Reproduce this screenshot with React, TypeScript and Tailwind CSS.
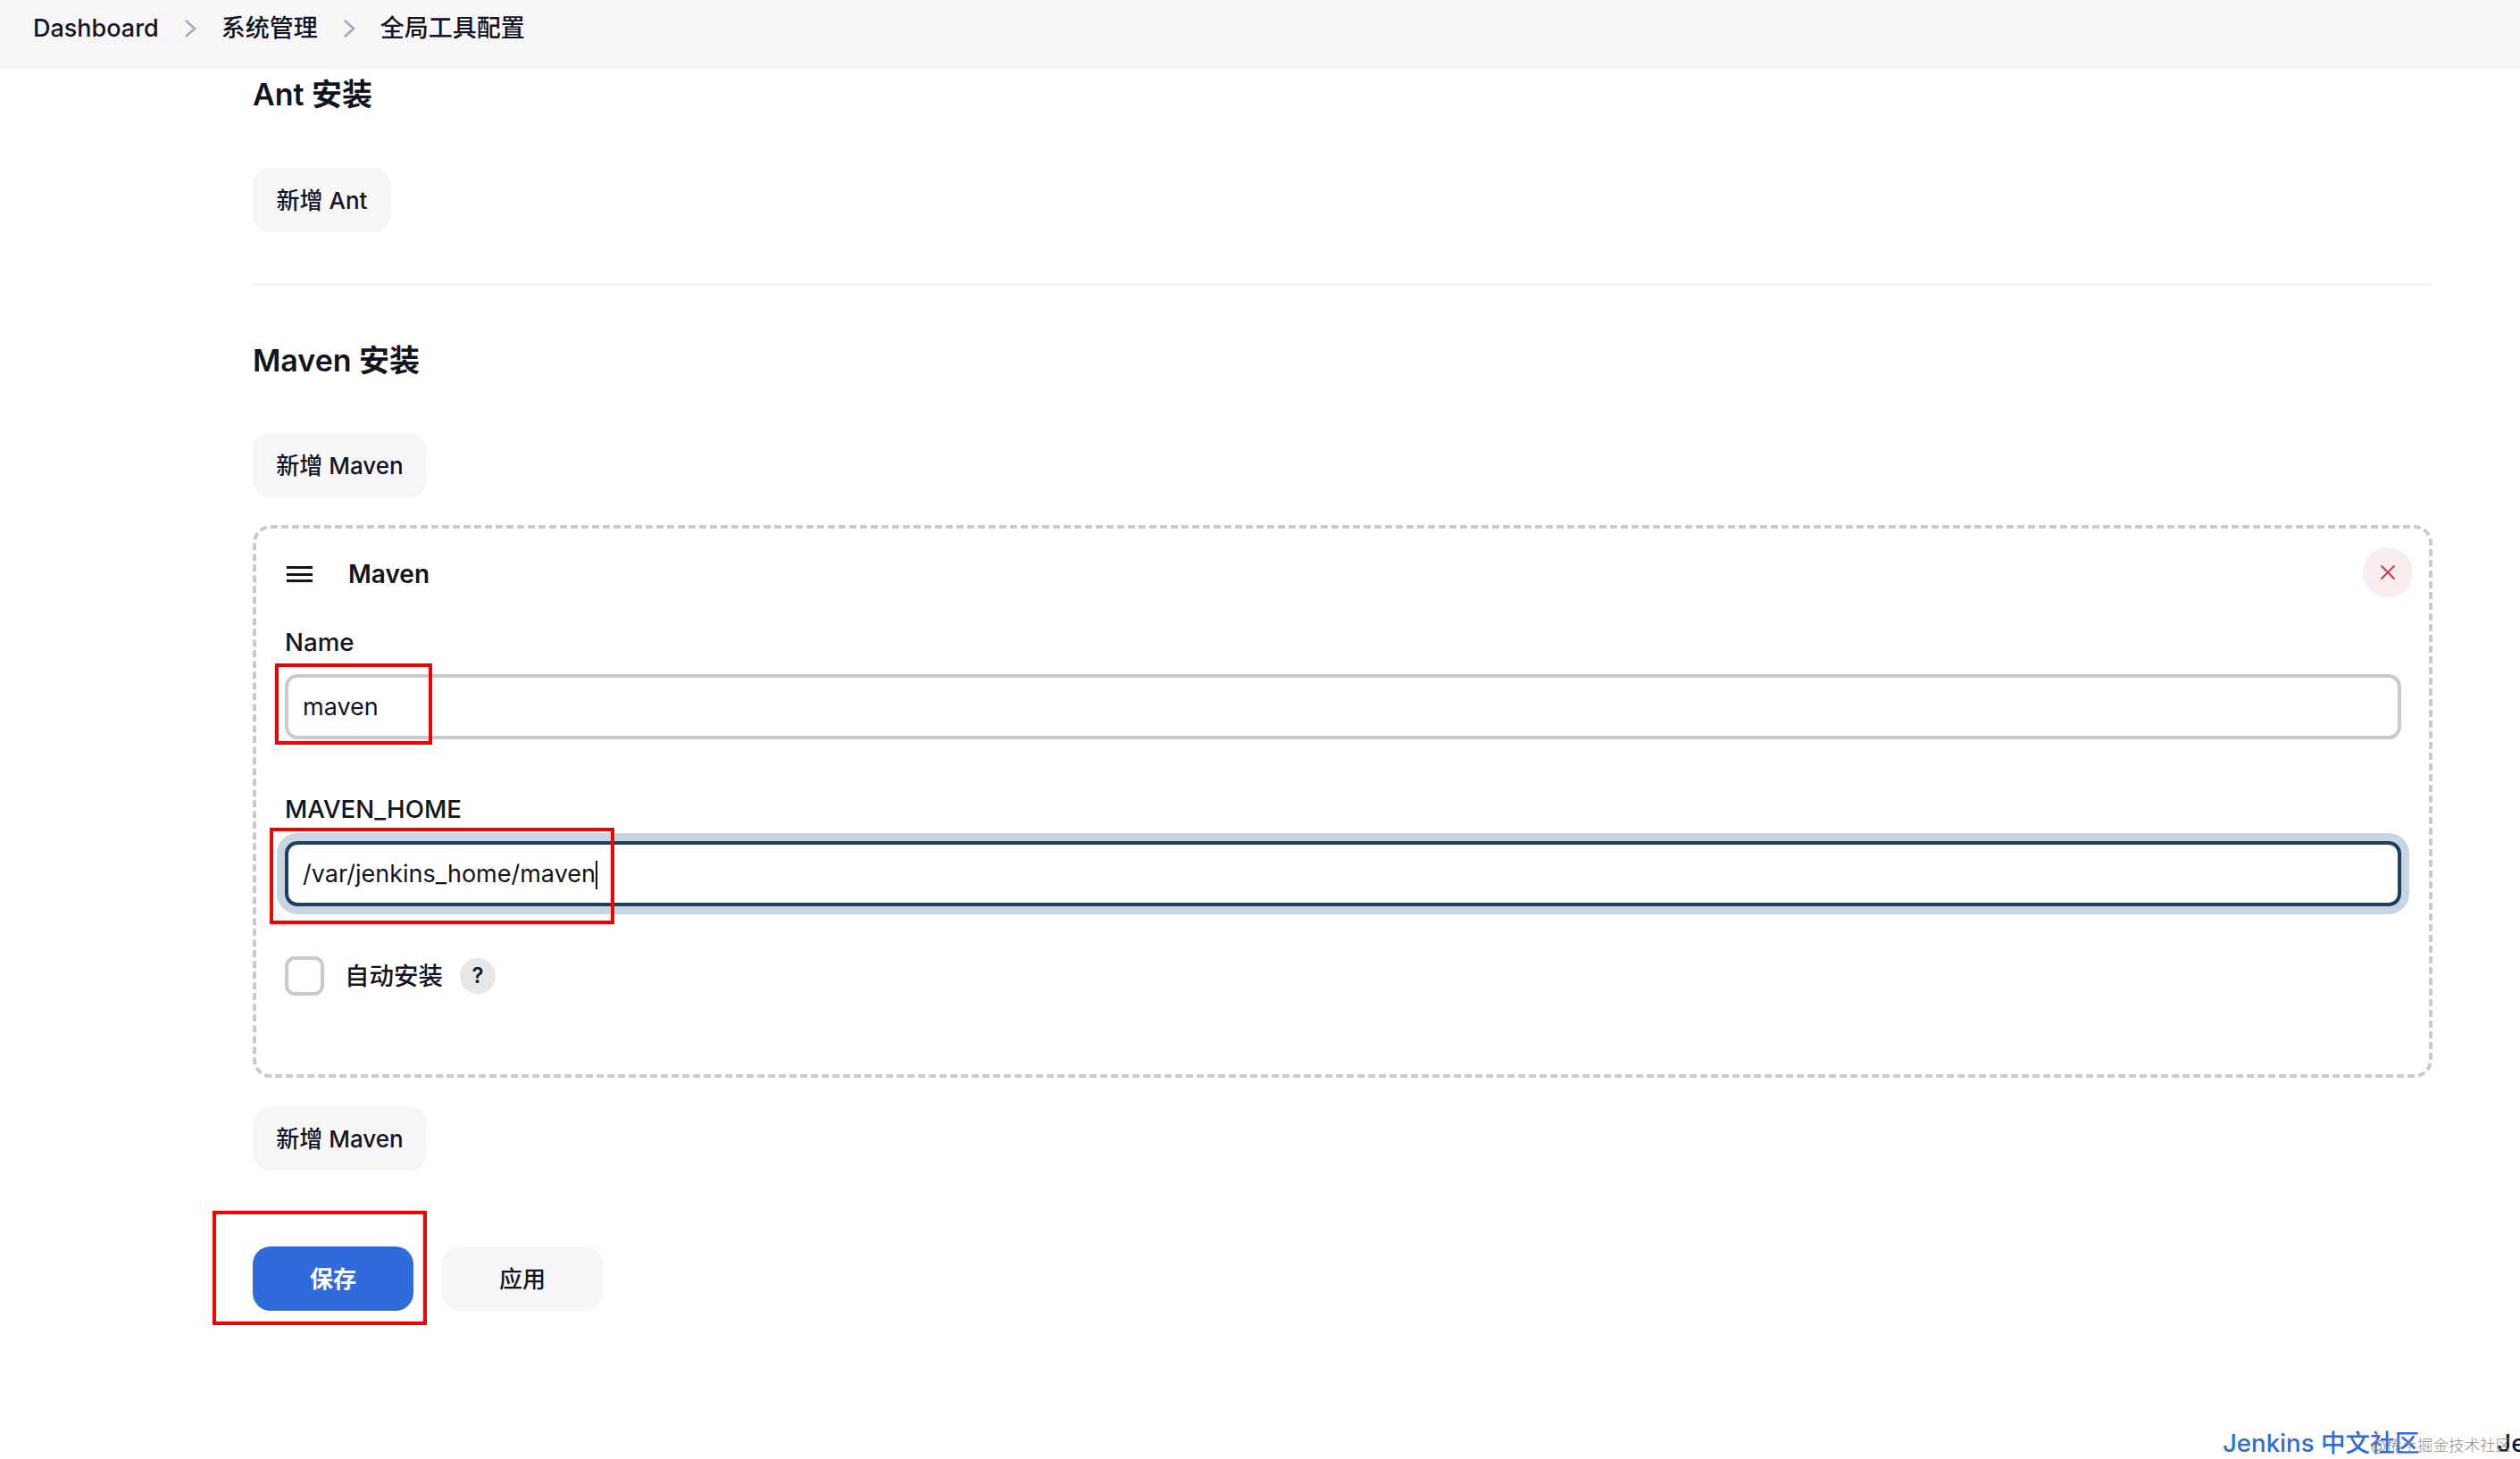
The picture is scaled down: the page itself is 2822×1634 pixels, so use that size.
import type { ReactNode } from 'react'

const font = { fontFamily: 'Inter, "Noto Sans CJK SC", sans-serif' }

function Chevron() {
  return (
    <svg width="14" height="22" viewBox="0 0 14 22" fill="none" className="shrink-0">
      <path d="M2 2l10 9-10 9" stroke="#a9a9af" strokeWidth="2.6" />
    </svg>
  )
}

function GreyButton({ children, className = '' }: { children: ReactNode; className?: string }) {
  return (
    <button className={`h-[72px] rounded-[20px] bg-[#f6f6f8] text-[26px] font-medium text-[#14141f] ${className}`}>
      {children}
    </button>
  )
}

function RedBox({ className }: { className: string }) {
  return <div className={`absolute border-4 border-[#f50000] ${className}`} />
}

export default function App() {
  return (
    <div style={font} className="relative flex h-[1634px] w-full flex-col overflow-hidden bg-white text-[#14141f]">
      <header className="flex h-[77px] shrink-0 items-start gap-[28px] bg-[#f6f6f8] pl-[37px] pt-[13px] text-[27px] font-medium leading-[38px]">
        <span>Dashboard</span>
        <span className="pt-[8px]"><Chevron /></span>
        <span>系统管理</span>
        <span className="pt-[8px]"><Chevron /></span>
        <span>全局工具配置</span>
      </header>

      <main className="flex flex-col items-start pl-[283px] pr-[98px]">
        <h2 className="mt-[5px] text-[34px] font-semibold leading-[48px]">Ant 安装</h2>
        <GreyButton className="mt-[58px] w-[155px]">新增 Ant</GreyButton>
        <div className="mt-[57px] h-[3px] w-full bg-[#f4f4f6]" />

        <h2 className="mt-[60px] text-[34px] font-semibold leading-[48px]">Maven 安装</h2>
        <GreyButton className="mt-[57px] w-[195px]">新增 Maven</GreyButton>

        <section className="mt-[31px] h-[619px] w-full rounded-[20px] border-4 border-dashed border-[#c9cccf] pl-[32px] pr-[31px] pt-[21px]">
          <div className="flex h-[56px] items-center justify-between">
            <div className="flex items-center gap-[40px] pt-[4px]">
              <div className="flex w-[31px] flex-col gap-[4.5px] pl-[2px]">
                <span className="h-[3px] bg-[#14141f]" />
                <span className="h-[3px] bg-[#14141f]" />
                <span className="h-[3px] bg-[#14141f]" />
              </div>
              <span className="text-[28px] font-semibold leading-[36px]">Maven</span>
            </div>
            <button className="-mr-[13px] flex h-[56px] w-[56px] items-center justify-center rounded-full bg-[#f9eced]">
              <svg width="18" height="18" viewBox="0 0 18 18" fill="none">
                <path d="M1.5 1.5l15 15M16.5 1.5l-15 15" stroke="#c8364a" strokeWidth="1.8" />
              </svg>
            </button>
          </div>

          <label className="mt-[31px] block pt-[1px] text-[27.7px] font-medium leading-[36px]">Name</label>
          <div className="relative mt-[18px] flex h-[73px] items-center rounded-[14px] border-4 border-[#c8cbce] pl-[16px] pt-[2px] text-[27px]">
            maven
            <RedBox className="-left-[15px] -top-[16px] h-[91px] w-[176px]" />
          </div>

          <label className="mt-[59px] block pt-[1px] text-[27.7px] font-medium leading-[36px]">MAVEN_HOME</label>
          <div className="relative mt-[18px] flex h-[73px] items-center rounded-[14px] border-4 border-[#1f3d5c] pl-[16px] pt-[2px] text-[27px] shadow-[0_0_0_9px_#c8d6e4]">
            /var/jenkins_home/maven
            <span className="h-[32px] w-[2px] bg-[#14141f]" />
            <RedBox className="-left-[21px] -top-[19px] h-[108px] w-[386px]" />
          </div>

          <div className="mt-[56px] flex items-center">
            <div className="h-[44px] w-[44px] rounded-[11px] border-4 border-[#c8cbce]" />
            <span className="ml-[23px] text-[27.5px] font-medium leading-[36px]">自动安装</span>
            <span className="ml-[19px] flex h-[40px] w-[40px] items-center justify-center rounded-full bg-[#e6e7e8] text-[24px] font-semibold">?</span>
          </div>
        </section>

        <GreyButton className="mt-[32px] w-[195px]">新增 Maven</GreyButton>

        <div className="mt-[85px] flex gap-[32px]">
          <div className="relative">
            <button className="h-[72px] w-[180px] rounded-[20px] bg-[#2f6bdb] text-[26px] font-semibold text-white">保存</button>
            <RedBox className="-left-[45px] -top-[40px] h-[128px] w-[240px]" />
          </div>
          <GreyButton className="w-[180px]">应用</GreyButton>
        </div>
      </main>

      <footer className="mt-auto flex h-[38px] gap-[87px] whitespace-nowrap pl-[2489px] text-[27.6px] font-medium leading-[40px]">
        <span className="text-[#2f6bdb]">Jenkins 中文社区</span>
        <span>Jenkins 2.426.1</span>
      </footer>
      <span className="absolute left-[2655px] top-[1607px] whitespace-nowrap text-[17.5px] font-light leading-[24px] text-[#8f8f8f]">@稀土掘金技术社区</span>
    </div>
  )
}
